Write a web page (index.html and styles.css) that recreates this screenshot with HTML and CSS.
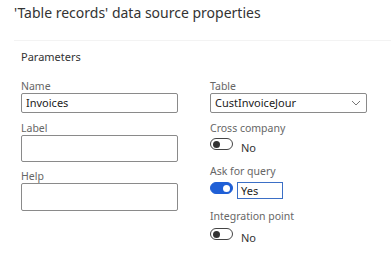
FILE: index.html
```html
<!DOCTYPE html>
<html>
<head>
<meta charset="utf-8">
<link rel="stylesheet" href="styles.css">
</head>
<body>
<div class="page">
  <h1 class="title">'Table records' data source properties</h1>
  <div class="sep"></div>
  <div class="section-title">Parameters</div>
  <div class="cols">
    <div class="col">
      <div class="field">
        <div class="label">Name</div>
        <div class="input">Invoices</div>
      </div>
      <div class="field f-label">
        <div class="label">Label</div>
        <div class="input tall"></div>
      </div>
      <div class="field">
        <div class="label">Help</div>
        <div class="input tall help"></div>
      </div>
    </div>
    <div class="col">
      <div class="field">
        <div class="label">Table</div>
        <div class="input select">CustInvoiceJour
          <svg class="chev" width="10" height="6" viewBox="0 0 10 6"><path d="M1 1 L5 5 L9 1" fill="none" stroke="#777" stroke-width="1"/></svg>
        </div>
      </div>
      <div class="field f-cross">
        <div class="label">Cross company</div>
        <div class="toggle-row">
          <span class="toggle off"><span class="dot"></span></span>
          <span class="tval">No</span>
        </div>
      </div>
      <div class="field f-ask">
        <div class="label">Ask for query</div>
        <div class="toggle-row r-ask">
          <span class="toggle on"><span class="dot"></span></span>
          <span class="yes">Yes</span>
        </div>
      </div>
      <div class="field">
        <div class="label">Integration point</div>
        <div class="toggle-row r-int">
          <span class="toggle off"><span class="dot"></span></span>
          <span class="tval">No</span>
        </div>
      </div>
    </div>
  </div>
</div>
</body>
</html>
```
FILE: styles.css
```css
* { box-sizing: border-box; }
html, body { margin: 0; padding: 0; background: #fff; }
body { font-family: "Noto Sans", "Open Sans", sans-serif; color: #323130; }
.page { width: 391px; height: 253px; overflow: hidden; }
.title {
  margin: 0;
  padding: 3px 0 0 14px;
  font-size: 14px;
  font-weight: 400;
  line-height: 20px;
  height: 38px;
  color: #333;
}
.sep { margin-left: 14px; height: 1px; background: #f3f3f3; margin-top: 2px; }
.section-title {
  padding-left: 21px;
  margin-top: 9px;
  font-size: 11px;
  line-height: 14px;
  color: #333;
}
.cols { display: flex; gap: 32px; padding-left: 21px; margin-top: 15px; }
.col { width: 157px; display: flex; flex-direction: column; }
.field { display: flex; flex-direction: column; margin-bottom: 8px; }
.f-label { margin-bottom: 7px; }
.f-cross { margin-bottom: 9px; }
.f-ask { margin-bottom: 11px; }
.label { font-size: 10.5px; line-height: 14px; color: #666; }
.input {
  height: 20px;
  border: 1px solid #8a8a8a;
  border-radius: 2px;
  font-size: 11px;
  line-height: 18px;
  padding-left: 4px;
  color: #222;
}
.input.tall { height: 27px; }
.input.help { height: 28px; }
.select { display: flex; align-items: center; justify-content: space-between; padding-right: 5px; }
.chev { display: block; }
.toggle-row { display: flex; align-items: flex-start; height: 17px; margin-top: 3px; }
.toggle {
  width: 23px; height: 12px; border-radius: 6px;
  border: 1.5px solid #444; display: flex; align-items: center; padding: 0 2px;
}
.toggle .dot { width: 7px; height: 7px; border-radius: 50%; background: #333; }
.toggle.on { background: #1f5fd6; border-color: #1f5fd6; justify-content: flex-end; margin-top: 1px; }
.toggle.on .dot { background: #fff; }
.r-int .toggle { margin-top: 2px; }
.tval { font-size: 11px; line-height: 14px; margin-left: 8px; margin-top: 3px; color: #333; }
.r-int .tval { margin-top: 5px; }
.yes {
  margin-left: 4px; margin-top: 1px; width: 46px; height: 17px; border: 1px solid #3b6fc6;
  font-size: 11px; line-height: 15px; padding-left: 3px; color: #222;
}
```
